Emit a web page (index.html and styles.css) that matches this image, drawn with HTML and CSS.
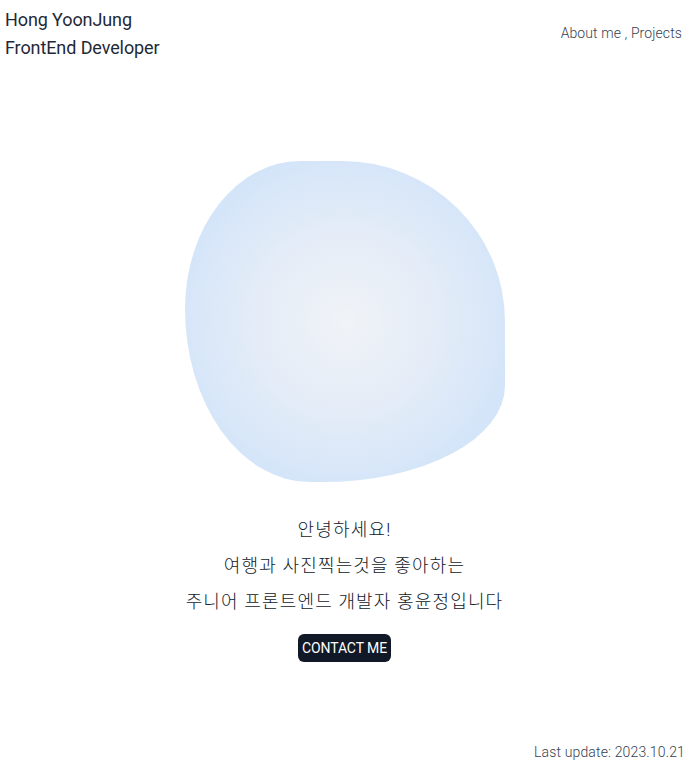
FILE: index.html
```html
<!DOCTYPE html>
<html lang="ko">
<head>
<meta charset="utf-8">
<title>Hong YoonJung</title>
<link rel="stylesheet" href="styles.css">
</head>
<body>
<div class="page">
  <header class="header">
    <div class="brand">
      <div>Hong YoonJung</div>
      <div>FrontEnd Developer</div>
    </div>
    <nav class="nav">About me , Projects</nav>
  </header>
  <main class="main">
    <div class="blob"></div>
    <div class="intro">
      <p>안녕하세요!</p>
      <p>여행과 사진찍는것을 좋아하는</p>
      <p>주니어 프론트엔드 개발자 홍윤정입니다</p>
    </div>
    <button class="contact">CONTACT ME</button>
  </main>
  <footer class="footer">Last update: 2023.10.21</footer>
</div>
</body>
</html>
```

FILE: styles.css
```css
html, body {
  margin: 0;
  padding: 0;
  background: #ffffff;
}
body {
  font-family: Roboto, "Noto Sans CJK KR", sans-serif;
  color: #111827;
}
.page {
  min-height: 100vh;
  display: flex;
  flex-direction: column;
}
.header {
  display: flex;
  justify-content: space-between;
  align-items: center;
  padding: 6px 7px 0 5px;
}
.brand {
  font-size: 18px;
  line-height: 28px;
  letter-spacing: -0.1px;
  color: #1f2937;
}
.nav {
  font-size: 14px;
  line-height: 20px;
  font-weight: 300;
  letter-spacing: 0.1px;
  color: #374151;
  margin-top: -2px;
}
.main {
  display: flex;
  flex-direction: column;
  align-items: center;
}
.blob {
  margin-top: 99px;
  width: 320px;
  height: 321px;
  border-radius: 36% 51% 57% 39% / 46% 50% 30% 54%;
  background: radial-gradient(circle at 50% 50%, #f0f3f7 0%, #e6edf7 35%, #d4e5f9 75%, #d3e4f9 100%);
}
.intro {
  margin-top: 30px;
  text-align: center;
  font-size: 18px;
  line-height: 36px;
  font-weight: 300;
  letter-spacing: 1.15px;
  color: #111827;
}
.intro p {
  margin: 0;
}
.contact {
  margin-top: 14px;
  height: 28px;
  padding: 0 4px;
  border: none;
  border-radius: 6px;
  background: #111827;
  color: #ffffff;
  font-family: Roboto, sans-serif;
  font-size: 14px;
  line-height: 28px;
  letter-spacing: -0.1px;
  cursor: pointer;
}
.footer {
  margin-top: auto;
  align-self: flex-end;
  padding: 0 4px 10px 0;
  font-size: 14px;
  line-height: 20px;
  font-weight: 300;
  letter-spacing: 0.15px;
  color: #374151;
}
```
